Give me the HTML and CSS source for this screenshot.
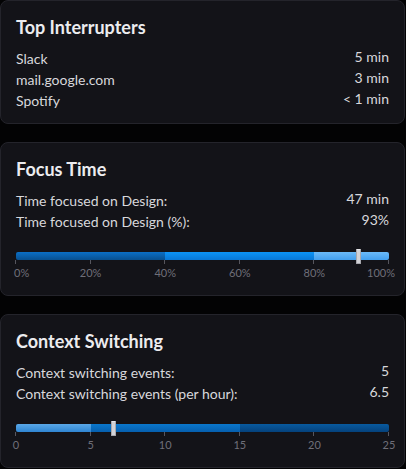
FILE: index.html
```html
<!DOCTYPE html>
<html>
<head>
<meta charset="utf-8">
<link rel="stylesheet" href="styles.css">
</head>
<body>
<div class="stack">
  <section class="card">
    <h2 class="title">Top Interrupters</h2>
    <div class="rows">
      <div class="row"><span class="label">Slack</span><span class="value">5 min</span></div>
      <div class="row"><span class="label">mail.google.com</span><span class="value">3 min</span></div>
      <div class="row"><span class="label">Spotify</span><span class="value">&lt; 1 min</span></div>
    </div>
  </section>

  <section class="card">
    <h2 class="title">Focus Time</h2>
    <div class="rows">
      <div class="row"><span class="label">Time focused on Design:</span><span class="value">47 min</span></div>
      <div class="row"><span class="label">Time focused on Design (%):</span><span class="value">93%</span></div>
    </div>
    <div class="gauge">
      <div class="bar">
        <div class="seg f1" style="flex-basis:40%"></div>
        <div class="seg f2" style="flex-basis:40%"></div>
        <div class="seg f3" style="flex-basis:20%"></div>
      </div>
      <div class="marker" style="left:91.6%"></div>
      <div class="axis">
        <span class="tick" style="left:0%"></span>
        <span class="tick" style="left:20%"></span>
        <span class="tick" style="left:40%"></span>
        <span class="tick" style="left:60%"></span>
        <span class="tick" style="left:80%"></span>
        <span class="tick" style="left:100%"></span>
        <span class="lbl first">0%</span>
        <span class="lbl" style="left:20%">20%</span>
        <span class="lbl" style="left:40%">40%</span>
        <span class="lbl" style="left:60%">60%</span>
        <span class="lbl" style="left:80%">80%</span>
        <span class="lbl last">100%</span>
      </div>
    </div>
  </section>

  <section class="card">
    <h2 class="title">Context Switching</h2>
    <div class="rows">
      <div class="row"><span class="label">Context switching events:</span><span class="value">5</span></div>
      <div class="row"><span class="label">Context switching events (per hour):</span><span class="value">6.5</span></div>
    </div>
    <div class="gauge">
      <div class="bar">
        <div class="seg c1" style="flex-basis:20%"></div>
        <div class="seg c2" style="flex-basis:40%"></div>
        <div class="seg c3" style="flex-basis:40%"></div>
      </div>
      <div class="marker" style="left:26%"></div>
      <div class="axis">
        <span class="tick" style="left:0%"></span>
        <span class="tick" style="left:20%"></span>
        <span class="tick" style="left:40%"></span>
        <span class="tick" style="left:60%"></span>
        <span class="tick" style="left:80%"></span>
        <span class="tick" style="left:100%"></span>
        <span class="lbl" style="left:0%">0</span>
        <span class="lbl" style="left:20%">5</span>
        <span class="lbl" style="left:40%">10</span>
        <span class="lbl" style="left:60%">15</span>
        <span class="lbl" style="left:80%">20</span>
        <span class="lbl" style="left:100%">25</span>
      </div>
    </div>
  </section>
</div>
</body>
</html>
```

FILE: styles.css
```css
html, body {
  margin: 0;
  padding: 0;
  background: #030304;
}

body {
  font-family: Lato, "Open Sans", "Liberation Sans", sans-serif;
  color: #d6d6da;
  width: 406px;
  overflow: hidden;
}

.stack {
  display: flex;
  flex-direction: column;
  gap: 18px;
  padding-right: 1px;
}

.card {
  background: #131318;
  border: 1px solid #24242b;
  border-radius: 8px;
  padding: 15px 15px 12px 15px;
}

.title {
  margin: 0 0 10px 0;
  font-size: 18px;
  line-height: 22px;
  font-weight: 700;
  color: #ececef;
}

.rows {
  display: flex;
  flex-direction: column;
}

.row {
  display: flex;
  justify-content: space-between;
  align-items: center;
  font-size: 14px;
  line-height: 21px;
}

.label {
  color: #d8d8dc;
}

.value {
  color: #d8d8dc;
  padding-bottom: 4px;
  line-height: 17px;
}

.gauge {
  position: relative;
  margin-top: 20px;
  margin-bottom: 3px;
}

.bar {
  display: flex;
  height: 8px;
  border-radius: 2px;
  overflow: hidden;
}

.seg {
  flex-grow: 0;
  flex-shrink: 0;
}

.f1 { background: linear-gradient(#0b6fc6, #08508f); }
.f2 { background: linear-gradient(#0c93f6, #0877d6); }
.f3 { background: linear-gradient(#6bbaf8, #429fee); }

.c1 { background: linear-gradient(#5aa8e8, #2f85d2); }
.c2 { background: linear-gradient(#0a77cc, #065fae); }
.c3 { background: linear-gradient(#085a9f, #05427c); }

.marker {
  position: absolute;
  top: -3px;
  width: 3px;
  height: 13px;
  margin-left: -2px;
  background: #d2d2d6;
  border: 1px solid #a8a8ae;
  border-top-color: #e6e6ea;
  border-radius: 1px;
  box-sizing: content-box;
}

.axis {
  position: relative;
  height: 20px;
}

.tick {
  position: absolute;
  top: 0;
  width: 1px;
  height: 4px;
  margin-left: -1px;
  background: #56565e;
}

.lbl {
  position: absolute;
  top: 6px;
  font-size: 11px;
  line-height: 14px;
  color: #6f6f78;
  transform: translateX(-50%);
  white-space: nowrap;
}

.lbl.first {
  left: -2px;
  transform: none;
}

.lbl.last {
  right: -6px;
  transform: none;
}
```
